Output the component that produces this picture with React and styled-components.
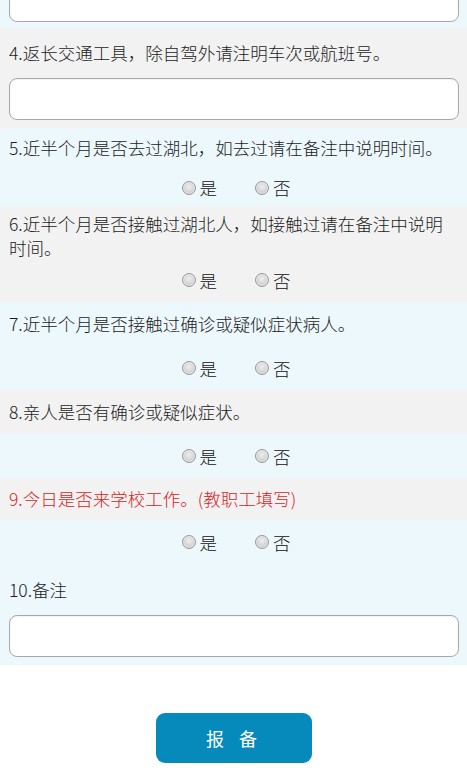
import React from "react"
import styled, { createGlobalStyle } from "styled-components"

const GlobalStyle = createGlobalStyle`
  html, body {
    margin: 0;
    padding: 0;
    background: #fff;
  }
  body {
    font-family: "Noto Sans CJK SC", "Noto Sans", sans-serif;
    color: #222;
  }
`

const Page = styled.div`
  width: 467px;
  display: flex;
  flex-direction: column;
`

const Row = styled.div`
  display: flex;
  flex-direction: column;
  background-color: ${p => (p.$grey ? "#f2f2f2" : "#ecf8fc")};
  padding: 0 8px ${p => p.$pb || 0}px 9px;
  &.clipped {
    height: 28px;
    justify-content: flex-end;
    overflow: hidden;
    padding-bottom: 6px;
    box-sizing: border-box;
  }
`

const Title = styled.div`
  display: flex;
  align-items: center;
  min-height: ${p => p.$h}px;
  margin: 0 -8px 0 -9px;
  padding: 0 12px 0 9px;
  font-size: 17.5px;
  font-weight: 300;
  line-height: 24px;
  color: ${p => (p.$red ? "#d81c1c" : "#1c1c1c")};
  background-color: ${p => (p.$grey ? "#f2f2f2" : "transparent")};
`

const TextInput = styled.input`
  display: block;
  box-sizing: border-box;
  width: 100%;
  height: 42px;
  flex-shrink: 0;
  border: 1px solid #a8a8a8;
  border-radius: 8px;
  background: #fff;
  box-shadow: inset 0 1px 2px rgba(0, 0, 0, 0.06);
  outline: none;
`

const Options = styled.div`
  display: flex;
  justify-content: center;
  align-items: center;
  gap: 38px;
  height: ${p => p.$h}px;
  padding-bottom: ${p => p.$pb || 0}px;
  padding-left: 4px;
  box-sizing: border-box;
`

const Choice = styled.label`
  display: flex;
  align-items: center;
  gap: 4px;
  font-size: 17.5px;
  font-weight: 300;
  color: #111;
  cursor: pointer;
`

const Dot = styled.span`
  display: inline-block;
  width: 14px;
  height: 14px;
  box-sizing: border-box;
  border-radius: 50%;
  border: 1px solid #999;
  background: radial-gradient(circle at 50% 40%, #eeeeee 0%, #d6d6d6 50%, #b8b8b8 100%);
  box-shadow: inset 0 0 0 1px rgba(255, 255, 255, 0.5);
`

const Footer = styled.div`
  display: flex;
  justify-content: center;
  padding: 48px 0 16px;
`

const SubmitButton = styled.button`
  width: 156px;
  height: 50px;
  border: none;
  border-radius: 9px;
  background-color: #068abc;
  color: #fff;
  font-family: "Noto Sans CJK SC", sans-serif;
  font-size: 18px;
  letter-spacing: 15px;
  padding-left: 17px;
  cursor: pointer;
`

const YesNo = ({ h, pb }) => (
  <Options $h={h} $pb={pb}>
    <Choice><Dot />是</Choice>
    <Choice><Dot />否</Choice>
  </Options>
)

export default function App() {
  return (
    <Page>
      <GlobalStyle />
      <Row className="clipped">
        <TextInput />
      </Row>
      <Row $grey $pb={8}>
        <Title $h={50}>4.返长交通工具，除自驾外请注明车次或航班号。</Title>
        <TextInput />
      </Row>
      <Row>
        <Title $h={40}>5.近半个月是否去过湖北，如去过请在备注中说明时间。</Title>
        <YesNo h={39} />
      </Row>
      <Row $grey>
        <Title $h={58}>6.近半个月是否接触过湖北人，如接触过请在备注中说明时间。</Title>
        <YesNo h={37} pb={7} />
      </Row>
      <Row>
        <Title $h={44}>7.近半个月是否接触过确诊或疑似症状病人。</Title>
        <YesNo h={44} />
      </Row>
      <Row>
        <Title $h={44} $grey>8.亲人是否有确诊或疑似症状。</Title>
        <YesNo h={44} />
      </Row>
      <Row>
        <Title $h={42} $grey $red>9.今日是否来学校工作。(教职工填写)</Title>
        <YesNo h={44} />
      </Row>
      <Row $pb={8}>
        <Title $h={51}>10.备注</Title>
        <TextInput />
      </Row>
      <Footer>
        <SubmitButton>报备</SubmitButton>
      </Footer>
    </Page>
  )
}
